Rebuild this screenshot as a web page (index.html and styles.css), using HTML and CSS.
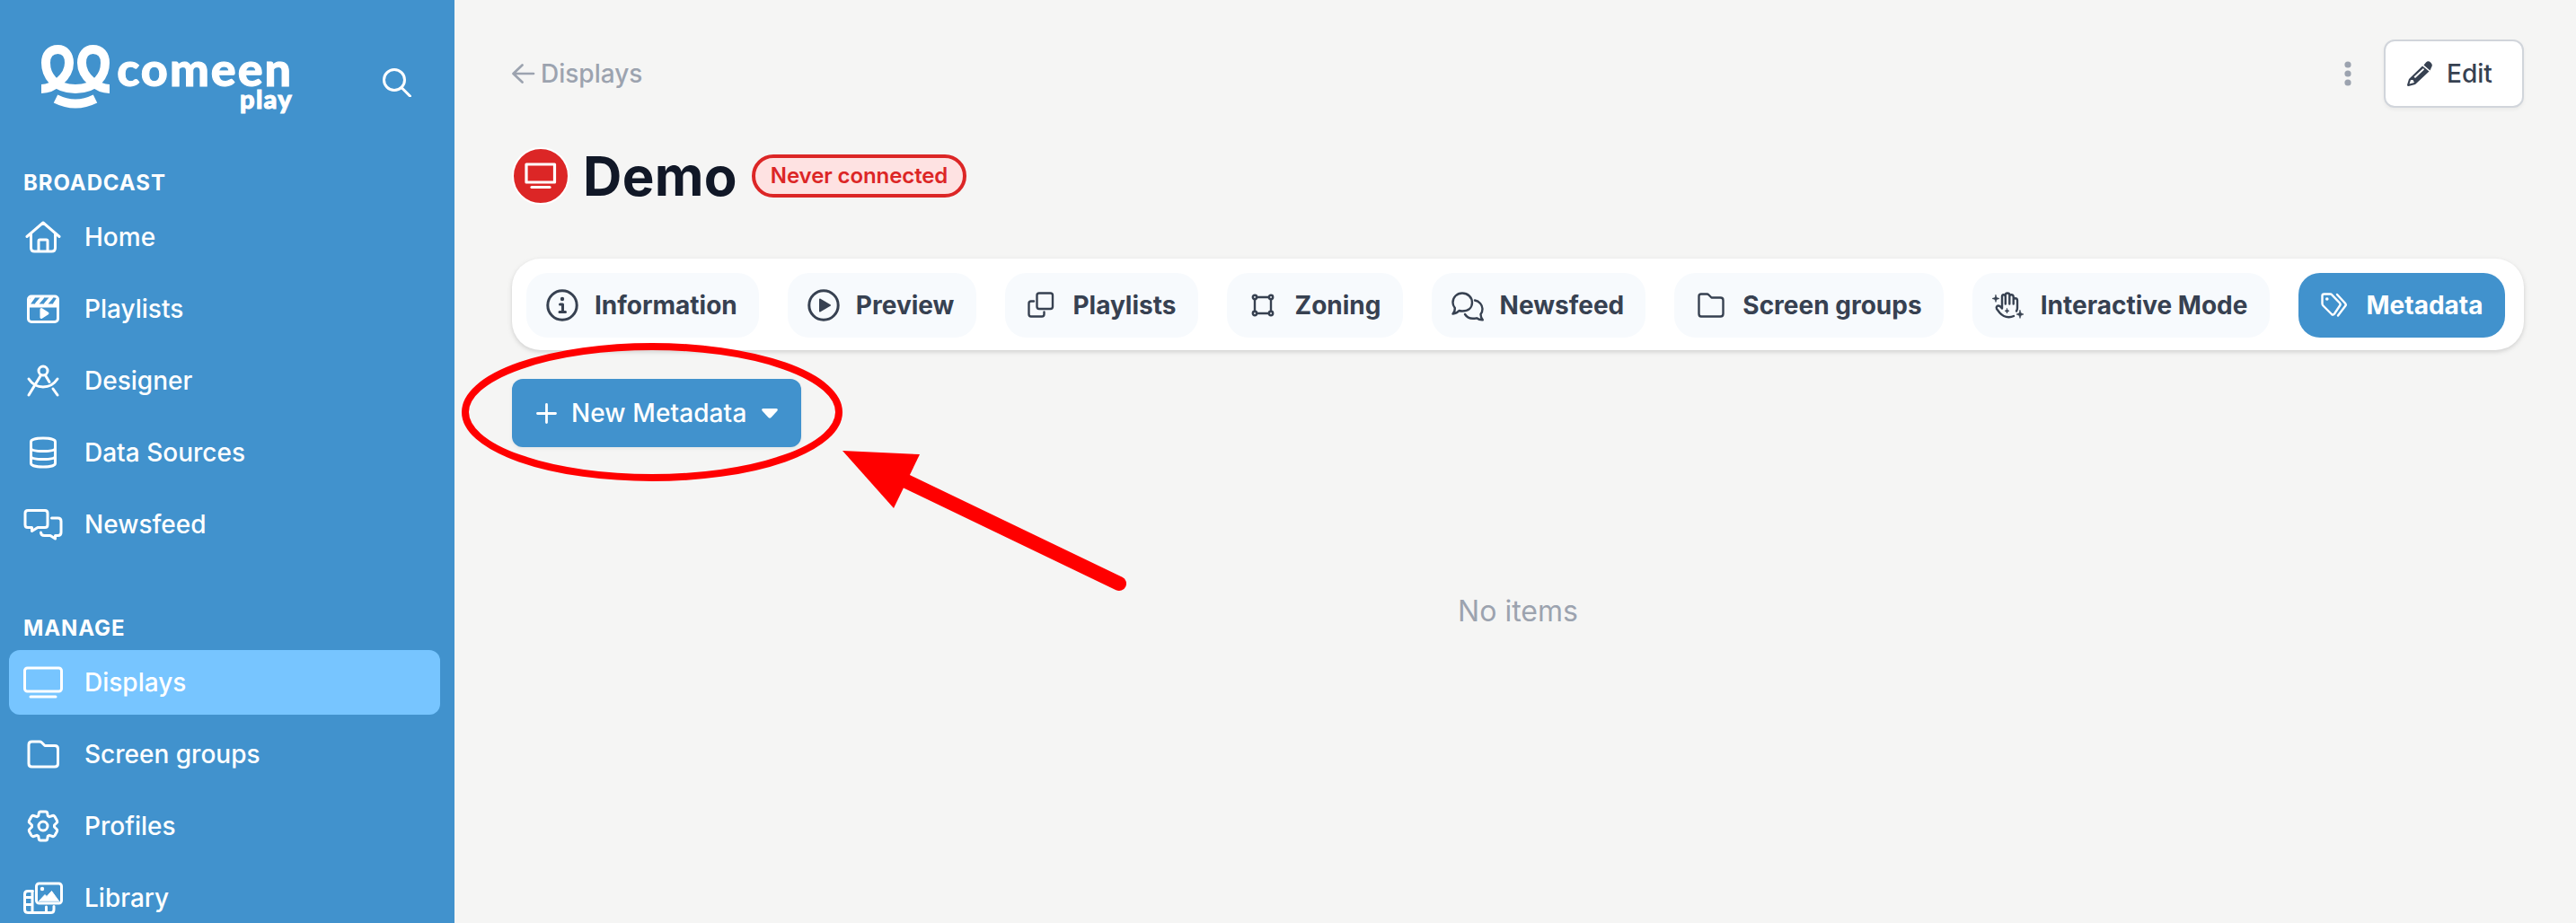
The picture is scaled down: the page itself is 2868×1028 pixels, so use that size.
FILE: index.html
```html
<!DOCTYPE html>
<html lang="en">
<head>
<meta charset="utf-8">
<title>Demo - Displays</title>
<link rel="stylesheet" href="styles.css">
</head>
<body>
<aside class="sidebar">
  <header class="brand">
    <div class="logo">
      <svg class="logo-mark" viewBox="0 0 76 71" fill="none" stroke="#fff" stroke-width="10">
        <path d="M0 49C13 49 31 36 31 20C31 11 26 5 18.500 5C10 5 5 11 5 20C5 33 14 49 38 49C62 49 71 33 71 20C71 11 66 5 57.500 5C50 5 45 11 45 20C45 36 63 49 76 49"/>
        <path d="M16 60Q38 71 60 60"/>
      </svg>
      <div class="wordmark"><span class="word">comeen</span><span class="subword">play</span></div>
    </div>
    <svg class="search" viewBox="0 0 32 32" fill="none" stroke="#fff" stroke-width="3" stroke-linecap="round"><circle cx="13" cy="13" r="11.500"/><path d="M21.500 22L30.500 31"/></svg>
  </header>

  <h2 class="section">Broadcast</h2>
  <nav class="menu">
    <a class="item"><svg class="icon" viewBox="0 0 44 36"><path d="M4 17.500L22 2L40 17.500M8.500 14V30Q8.500 34 12.500 34H31.500Q35.500 34 35.500 30V14M17 34V22.500Q17 21 18.500 21H25.500Q27 21 27 22.500V34"/></svg>Home</a>
    <a class="item"><svg class="icon" viewBox="0 0 44 36"><rect x="5.500" y="4" width="33" height="28.500" rx="3.500"/><path d="M6 14.500H38M6 12L11 5M15 12.500L21 5.500M25 12.500L31 5.500M35 12.500L38 8" stroke-width="4"/><path class="solid" d="M20 18.500L27 23L20 27.500Z"/></svg>Playlists</a>
    <a class="item"><svg class="icon" viewBox="0 0 44 36"><circle cx="22" cy="7" r="5"/><path d="M19.500 12L6 34M24.500 12L29 19.500M33 27L38 34M6 16Q12 25 22 25Q32 25 38 16"/></svg>Designer</a>
    <a class="item"><svg class="icon" viewBox="0 0 44 36"><path d="M8.500 6C8.500 3.500 14 2 22 2S35.500 3.500 35.500 6V30C35.500 32.500 30 34 22 34S8.500 32.500 8.500 30ZM8.500 13C8.500 15.500 14 16.500 22 16.500S35.500 15.500 35.500 13M8.500 22C8.500 24.500 14 25.500 22 25.500S35.500 24.500 35.500 22"/></svg>Data Sources</a>
    <a class="item"><svg class="icon" viewBox="0 0 44 36"><path d="M5 2.500H24Q27 2.500 27 5.500V18.500Q27 21.500 24 21.500H16L9.500 25.500V21.500H5Q2 21.500 2 18.500V5.500Q2 2.500 5 2.500Z"/><path d="M31.500 11H38.500Q42 11 42 14.500V27Q42 30.500 38.500 30.500H35.500V34L30 30.500H23.500Q19.500 30.500 19.500 27"/></svg>Newsfeed</a>
  </nav>

  <h2 class="section">Manage</h2>
  <nav class="menu">
    <a class="item active"><svg class="icon" viewBox="0 0 44 36"><rect x="1.500" y="2" width="41" height="26" rx="3"/><path d="M8 34H36"/></svg>Displays</a>
    <a class="item"><svg class="icon" viewBox="0 0 44 36"><path d="M9.500 4H18Q19.500 4 20.500 5L24 8.500H35Q38.500 8.500 38.500 12V28.500Q38.500 32 35 32H9.500Q6 32 6 28.500V7.500Q6 4 9.500 4Z"/></svg>Screen groups</a>
    <a class="item"><svg class="icon" viewBox="0 0 44 36"><circle cx="22" cy="18" r="5"/><path d="M19 2H25Q26.500 2 26.800 4L27.200 6.600L29 7.700L32.500 6.500Q34 6 35 7.500L37.500 12Q38.200 13.500 37 14.500L34.500 17V19L37 21.500Q38.200 22.500 37.500 24L35 28.500Q34 30 32.500 29.500L29 28.300L27.200 29.400L26.800 32Q26.500 34 25 34H19Q17.500 34 17.200 32L16.800 29.400L15 28.300L11.500 29.500Q10 30 9 28.500L6.500 24Q5.800 22.500 7 21.500L9.500 19V17L7 14.500Q5.800 13.500 6.500 12L9 7.500Q10 6 11.500 6.500L15 7.700L16.800 6.600L17.200 4Q17.500 2 19 2Z"/></svg>Profiles</a>
    <a class="item"><svg class="icon" viewBox="0 0 44 36"><rect x="14.500" y="2" width="28" height="22" rx="3"/><circle class="dot" cx="21" cy="8" r="2.200"/><path class="solid" d="M17.500 21.500L24 14.500L26 16.500L31.500 10.500L39.500 21.500Z" stroke-width="1"/><path d="M10.500 10.500H5Q1.500 10.500 1.500 14V31Q1.500 34.500 5 34.500H31Q34 34.500 34 31V27.500M10 10.500V34M2 17.500H9M2 25.500H9M25.500 28V34"/></svg>Library</a>
  </nav>
</aside>

<main class="main">
  <div class="topbar">
    <a class="back"><svg width="26" height="22" viewBox="0 0 26 22" fill="none" stroke="currentColor" stroke-width="2.700" stroke-linecap="round" stroke-linejoin="round"><path d="M11.500 1.500L1.500 11L11.500 20.500M2 11H24"/></svg>Displays</a>
    <div class="actions">
      <svg width="8" height="28" viewBox="0 0 8 28" fill="#9ca3af"><circle cx="4" cy="4" r="3.600"/><circle cx="4" cy="14" r="3.600"/><circle cx="4" cy="24" r="3.600"/></svg>
      <button class="edit"><svg width="28" height="28" viewBox="0 0 28 28" fill="#374151"><path fill-rule="evenodd" d="M17 5.500L24.500 11.500L9 26L1.500 28Q0 28 0 26.500L2 20ZM18 8L7.500 17.500L9 19L19 9.500ZM4 21L2.500 25.500L8 24L6.500 21Z"/><path d="M18.500 4.500L21 1.500Q23.500-1 26.300 1.700Q29 4.500 27 7L25.500 10.500Z"/></svg>Edit</button>
    </div>
  </div>

  <div class="heading">
    <span class="avatar"><svg width="36" height="30" viewBox="0 0 36 30" fill="none" stroke="#fff" stroke-width="3.200" stroke-linecap="round" stroke-linejoin="round"><rect x="2" y="2" width="31.500" height="20"/><path d="M8 27.500H28"/></svg></span>
    <h1 class="title">Demo</h1>
    <span class="status">Never connected</span>
  </div>

  <div class="tabs">
    <a class="tab"><svg class="tab-icon" viewBox="0 0 36 36"><circle cx="18" cy="18" r="16.200"/><circle class="dot" cx="18" cy="11" r="2.200"/><path d="M15.500 17H18.500V25M15 25.500H21.500"/></svg>Information</a>
    <a class="tab"><svg class="tab-icon" viewBox="0 0 36 36"><circle cx="18" cy="18" r="16.200"/><path class="solid" d="M14 11.500L25 18L14 24.500Z" stroke-width="2"/></svg>Preview</a>
    <a class="tab"><svg class="tab-icon thin" viewBox="0 0 36 36"><rect x="13.500" y="4.500" width="17.500" height="17.500" rx="2.500"/><path d="M10 13.500H7Q4.500 13.500 4.500 16V28Q4.500 30.500 7 30.500H19Q21.500 30.500 21.500 28V25.500"/></svg>Playlists</a>
    <a class="tab"><svg class="tab-icon thin" viewBox="0 0 36 36"><path d="M11 9H25M11 27H25M9 11V25M27 11V25"/><circle cx="9" cy="9" r="2.200"/><circle cx="27" cy="9" r="2.200"/><circle cx="9" cy="27" r="2.200"/><circle cx="27" cy="27" r="2.200"/></svg>Zoning</a>
    <a class="tab"><svg class="tab-icon thin" viewBox="0 0 36 36"><path d="M1.500 27.500Q4 25 3.800 21Q1.500 18 1.500 15C1.500 9 6 4.500 12 4.500S23 9 23 15S18.500 24.500 12 24.500Q10 24.500 8.500 24Q6 27 1.500 27.500Z"/><path d="M26 12.500C31 13.500 34.500 17.500 34.500 22Q34.500 25.500 32.500 28Q32.500 31.500 34.800 34.300Q31 34.500 28 32.300C22.500 33.500 17.500 32 15 28"/></svg>Newsfeed</a>
    <a class="tab"><svg class="tab-icon thin" viewBox="0 0 36 36"><path d="M7 5.500H13.500Q14.500 5.500 15.500 6.500L18.500 9.500H28.500Q31.500 9.500 31.500 12.500V27.500Q31.500 30.500 28.500 30.500H7Q4.500 30.500 4.500 27.500V8Q4.500 5.500 7 5.500Z"/></svg>Screen groups</a>
    <a class="tab"><svg class="tab-icon thin" viewBox="0 0 36 36"><path d="M11 21.500V8.500Q11 6.300 12.700 6.300T14.800 8.300V16.500M14.800 7.500V6.500Q14.800 4.500 17 4.500T19.300 6.500V16.500M19.300 8Q19.300 6.300 21.300 6.300T23.700 8.500V16.500M23.700 12Q23.700 10.300 25.700 10.300T28 12.500V21Q28 23 27 24.500M11 21.500L8.500 19Q6.800 17.800 5.500 19T5 22L8.500 26.500Q12.500 31.200 18.500 31.200Q21.500 31.200 24 30"/><path class="solid" stroke-width=".6" d="M4 6.500L5 9.500L8 10.500L5 11.500L4 14.500L3 11.500L0 10.500L3 9.500ZM31 23.500L32 26.700L35 28L32 29.300L31 32.500L30 29.300L27 28L30 26.700ZM16.500 21.500L17.200 23.500L19 24.200L17.200 25L16.500 27L15.800 25L14 24.200L15.800 23.500Z"/></svg>Interactive Mode</a>
    <a class="tab selected"><svg class="tab-icon thin" viewBox="0 0 36 36"><path d="M6.500 5.500H13.500Q14.500 5.500 15.200 6.300L24 15.500Q25.300 17 24 18.500L18 27.500Q16.500 29.300 15 28L5.500 18.500Q4.500 17.500 4.500 16V7.500Q4.500 5.500 6.500 5.500ZM21 6L30 15.700Q31.500 17.300 30 19L22 29.500"/><circle class="dot" cx="9.800" cy="11" r="1.800"/></svg>Metadata</a>
  </div>

  <div class="toolbar">
    <button class="create"><svg width="23" height="23" viewBox="0 0 23 23" stroke="#fff" stroke-width="2.800" stroke-linecap="round"><path d="M11.500 1.500V21.500M1.500 11.500H21.500"/></svg><span>New Metadata</span><svg class="caret" width="18" height="11" viewBox="0 0 18 11" fill="#fff"><path d="M1.500 0H16.500Q19 .5 17 3L10.500 10Q9 11.500 7.500 10L1 3Q-1 .5 1.500 0Z"/></svg></button>
  </div>
  <p class="empty">No items</p>
</main>

<svg class="annotation" width="760" height="300" viewBox="506 376 760 300">
  <ellipse cx="726" cy="459" rx="208" ry="73" fill="none" stroke="#f00" stroke-width="8"/>
  <path d="M1009 536L1246 650" stroke="#f00" stroke-width="16" stroke-linecap="round"/>
  <path d="M938 502L1024 506L995 566Z" fill="#f00"/>
</svg>
</body>
</html>
```
FILE: styles.css
```css
* { box-sizing: border-box; }
body {
  margin: 0;
  height: 1028px;
  display: flex;
  overflow: hidden;
  background: #f5f5f4;
  color: #374151;
  font: 500 28px/40px Inter, "Liberation Sans", sans-serif;
}
h1, h2, p { margin: 0; }
button { font: inherit; }
svg { flex: none; }

.sidebar {
  flex: none;
  width: 506px;
  height: 1028px;
  overflow: hidden;
  background: #4192cd;
  color: #fff;
}
.brand {
  display: flex;
  justify-content: space-between;
  align-items: flex-start;
  height: 183px;
  padding: 50px 48px 0 46px;
}
.logo { display: flex; gap: 8px; }
.logo-mark { width: 76px; height: 71px; }
.wordmark {
  display: flex;
  flex-direction: column;
  align-items: flex-end;
  width: 196px;
  padding-top: 1px;
  font-family: Lato, sans-serif;
  font-weight: 900;
  -webkit-text-stroke: 1px #fff;
}
.word { font-size: 52px; line-height: 50px; letter-spacing: 2px; }
.subword { font-size: 29px; line-height: 30px; margin-top: -6px; letter-spacing: 1.3px; }
.search { width: 32px; height: 32px; margin-top: 26px; }

.section {
  height: 40px;
  padding: 1px 0 0 26px;
  font-size: 24px;
  line-height: 39px;
  font-weight: 700;
  letter-spacing: 0.9px;
  text-transform: uppercase;
}
.menu {
  display: flex;
  flex-direction: column;
  gap: 8px;
  padding: 5px 16px 0 10px;
  margin-bottom: 59px;
}
.item {
  display: flex;
  align-items: center;
  gap: 24px;
  height: 72px;
  flex: none;
  padding-left: 16px;
  border-radius: 12px;
}
.item.active { background: #77c5ff; }
.icon { width: 44px; height: 36px; }
.icon, .tab-icon {
  overflow: visible;
  fill: none;
  stroke: currentColor;
  stroke-width: 3;
  stroke-linecap: round;
  stroke-linejoin: round;
}
.solid { fill: currentColor; }
.dot { fill: currentColor; stroke: none; }

.main { flex: 1; padding: 44px 58px 0 64px; }
.topbar { display: flex; justify-content: space-between; align-items: center; height: 76px; }
.back { display: flex; align-items: center; gap: 6px; color: #9ca3af; }
.actions { display: flex; align-items: center; gap: 36px; }
.edit {
  display: flex;
  align-items: center;
  gap: 16px;
  width: 156px;
  height: 76px;
  padding: 0 0 0 24px;
  border: 2px solid #d1d5db;
  border-radius: 12px;
  background: #fff;
  color: #374151;
  box-shadow: 0 2px 4px rgba(0, 0, 0, .05);
}
.heading { display: flex; align-items: center; height: 72px; margin-top: 40px; }
.avatar {
  display: flex;
  align-items: center;
  justify-content: center;
  width: 64px;
  height: 64px;
  border: 2px solid #fff;
  border-radius: 50%;
  background: #dc2626;
}
.title {
  margin-left: 15px;
  font-size: 60px;
  font-weight: 700;
  line-height: 72px;
  letter-spacing: 0.3px;
  color: #111827;
}
.status {
  margin-left: 16px;
  height: 48px;
  padding: 0 17px;
  border: 4px solid #dc2626;
  border-radius: 24px;
  background: #fee2e2;
  color: #dc2626;
  font-size: 24px;
  font-weight: 600;
  letter-spacing: -0.1px;
}
.tabs {
  display: flex;
  gap: 32px;
  height: 102px;
  margin-top: 56px;
  padding: 16px 16px 14px;
  border-radius: 32px;
  background: #fff;
  box-shadow: 0 2px 6px rgba(0, 0, 0, .1), 0 2px 4px rgba(0, 0, 0, .06);
}
.tab {
  display: flex;
  align-items: center;
  gap: 17.6px;
  height: 72px;
  padding: 0 24.2px 0 22.3px;
  border-radius: 24px;
  background: #f7fafd;
  font-weight: 700;
  white-space: nowrap;
}
.tab.selected { background: #4192cd; color: #fff; }
.tab-icon { width: 36px; height: 36px; }
.thin { stroke-width: 2.4; }
.toolbar { display: flex; margin-top: 32px; }
.create {
  display: flex;
  align-items: center;
  gap: 16px;
  width: 322px;
  height: 76px;
  padding: 0 0 0 27px;
  border: 0;
  border-radius: 12px;
  background: #4192cd;
  color: #fff;
  letter-spacing: 0.1px;
  box-shadow: 0 2px 4px rgba(0, 0, 0, .06);
}
.caret { margin-left: 1px; }
.empty {
  margin-top: 161px;
  font-size: 32px;
  font-weight: 400;
  line-height: 44px;
  text-align: center;
  color: #9ca3af;
}
.annotation { position: absolute; left: 506px; top: 376px; }
```
